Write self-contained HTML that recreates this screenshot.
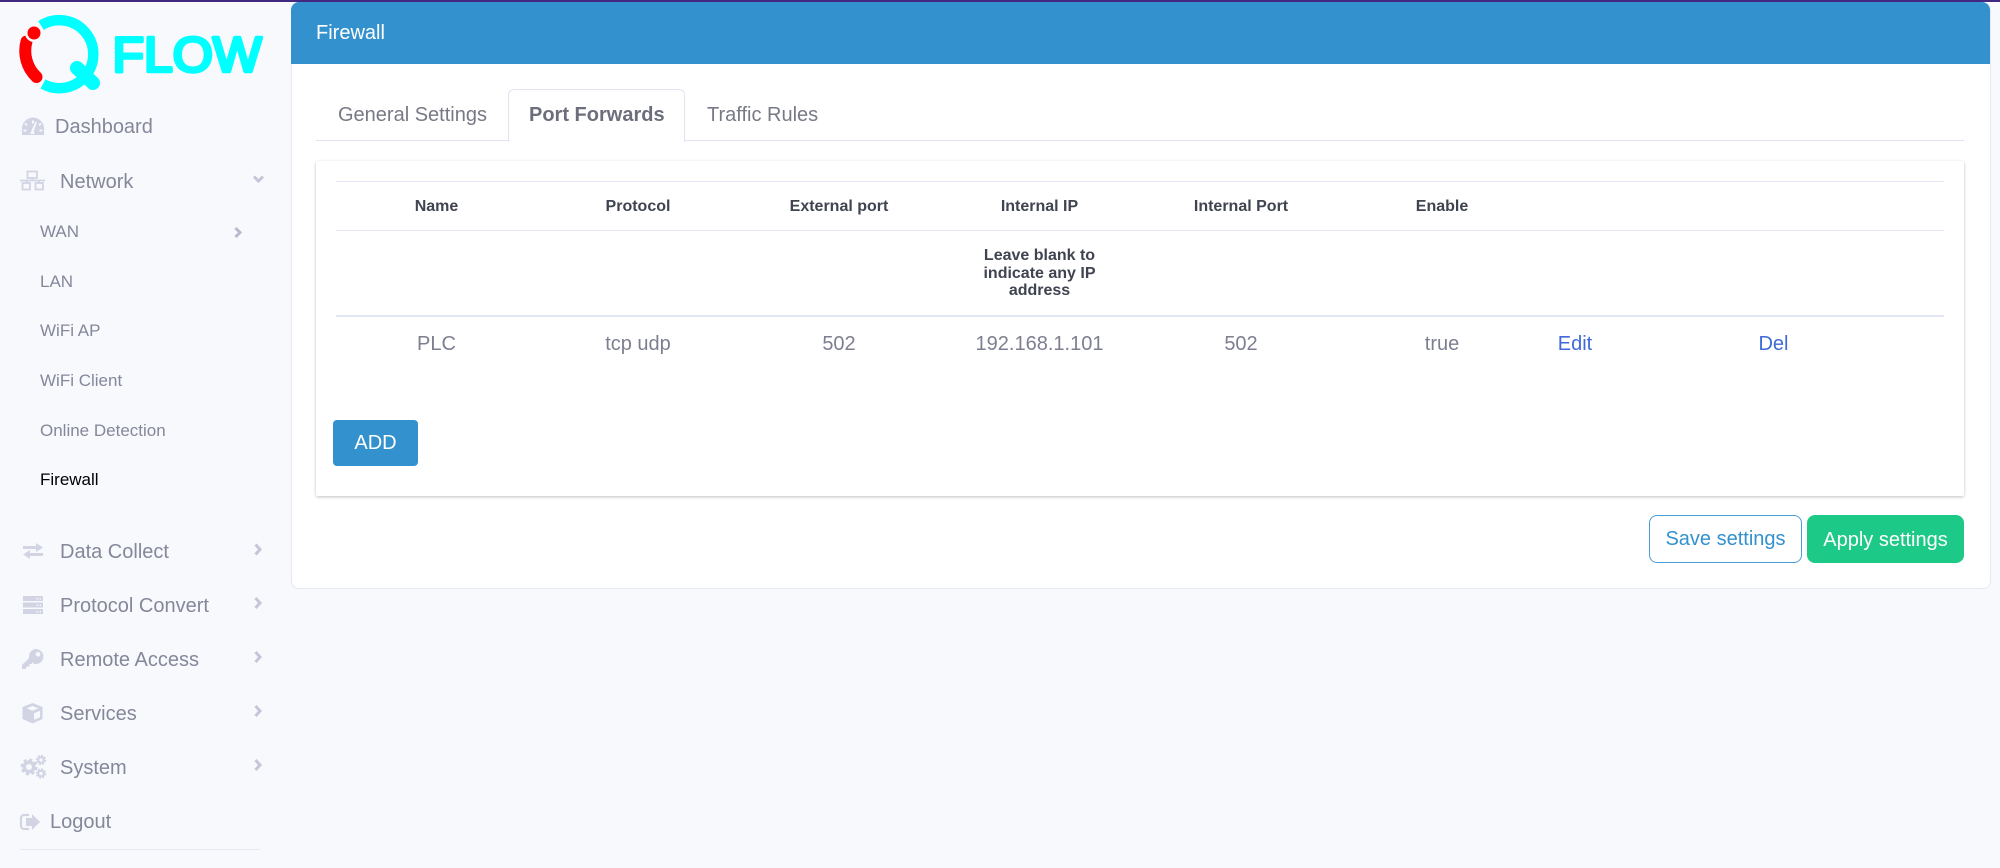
<!DOCTYPE html>
<html><head><meta charset="utf-8"><title>Firewall</title>
<style>
html,body{margin:0;padding:0;width:2000px;height:868px;overflow:hidden;background:#f8f9fd;font-family:"Liberation Sans",sans-serif}
.a{position:absolute}
.t{position:absolute;white-space:nowrap;line-height:24px;height:24px}
.m{font-size:20px;color:#85879a}
.s{font-size:17px;color:#85879a}
.c{transform:translateX(-50%)}
.h{font-size:16px;font-weight:bold;color:#3f4450}
.d{font-size:20px;color:#7d7f90}
.l{position:absolute;left:336px;width:1608px;background:#e3e6f5}
svg{position:absolute;overflow:visible}
</style></head><body>
<div class="a" style="left:0;top:0;width:2000px;height:2px;background:#42297f"></div>

<!-- logo -->
<svg style="left:0;top:0" width="290" height="100" viewBox="0 0 290 100">
<path d="M41 25.500A34 34 0 1 1 43 84" fill="none" stroke="#00ffff" stroke-width="10.500"/>
<path d="M77 68L93 83" stroke="#00ffff" stroke-width="14" stroke-linecap="round"/>
<path d="M26.500 41.500A36 36 0 0 0 36.500 77" fill="none" stroke="#ff0000" stroke-width="12" stroke-linecap="round"/>
<circle cx="34" cy="33" r="9" fill="#f8f9fd"/>
<circle cx="34" cy="33" r="6.500" fill="#ff0000"/>
<text x="112.500" y="71.500" font-family="Liberation Sans" font-size="49" textLength="149" lengthAdjust="spacingAndGlyphs" fill="#00ffff" stroke="#00ffff" stroke-width="3.500" stroke-linejoin="round">FLOW</text>
</svg>

<!-- sidebar icons -->
<svg style="left:0;top:0" width="290" height="868" viewBox="0 0 290 868" fill="#d2d4e4">
<!-- dashboard -->
<path fill-rule="evenodd" d="M33 117.500A11 11 0 0 1 44 128.500V135H22V128.500A11 11 0 0 1 33 117.500ZM32 120.500V123.500H34V120.500ZM25.500 122.800L24.500 124.300 26.500 126 27.500 124.500ZM40.500 122.800L38.500 124.500 39.500 126 41.500 124.300ZM35.500 121.500L31.500 130.500 30 134H34.500L34 130.500 37 122ZM23.500 129.500V131.500H26.500V129.500ZM39.500 129.500V131.500H42.500V129.500Z"/>
<!-- network -->
<g fill="none" stroke="#d2d4e4" stroke-width="1.800">
<rect x="27.500" y="171.500" width="9.500" height="6.500"/>
<rect x="22.500" y="183" width="7.500" height="6.500"/>
<rect x="35.500" y="183" width="7.500" height="6.500"/>
<path d="M20 180.500H45M32.500 178V180.500M26.500 180.500V183M39 180.500V183"/>
</g>
<!-- exchange -->
<path d="M23 546H36V543L43 547.500 36 552V549H23ZM43 553H30V550L23 554.500 30 559V556H43Z"/>
<!-- server -->
<path fill-rule="evenodd" d="M23 596H43V601H23ZM23 602.500H43V607.500H23ZM23 609H43V614H23ZM36.500 598V599.500H38V598ZM39.500 598V599.500H41V598ZM36.500 604.500V606H38V604.500ZM39.500 604.500V606H41V604.500ZM36.500 611V612.500H38V611ZM39.500 611V612.500H41V611Z"/>
<!-- key -->
<path fill-rule="evenodd" d="M36 649A7.500 7.500 0 1 1 33.800 663.700L32 662V664H29.500V666.500H27L25.500 669H22V665L29.100 658A7.500 7.500 0 0 1 36 649ZM38 652A2.300 2.300 0 1 0 38.100 656.600 2.300 2.300 0 0 0 38 652Z"/>
<!-- cube -->
<path fill-rule="evenodd" d="M32.500 703L42.500 707V719L32.500 723.500 22.500 719V707ZM32.500 706L26.500 708.300 32.500 710.800 38.500 708.300ZM34 713.200V719.800L40 717.300V710.700Z"/>
<!-- cogs -->
<circle cx="29" cy="767" r="4.800" fill="none" stroke="#d2d4e4" stroke-width="3.600"/>
<circle cx="29" cy="767" r="7.200" fill="none" stroke="#d2d4e4" stroke-width="2.600" stroke-dasharray="3 2.650"/>
<circle cx="41" cy="760" r="2.800" fill="none" stroke="#d2d4e4" stroke-width="2.200"/>
<circle cx="41" cy="760" r="4.400" fill="none" stroke="#d2d4e4" stroke-width="1.600" stroke-dasharray="2 1.450"/>
<circle cx="41" cy="773.500" r="2.800" fill="none" stroke="#d2d4e4" stroke-width="2.200"/>
<circle cx="41" cy="773.500" r="4.400" fill="none" stroke="#d2d4e4" stroke-width="1.600" stroke-dasharray="2 1.450"/>
<!-- logout -->
<path d="M29 815H24A3 3 0 0 0 21 818V826A3 3 0 0 0 24 829H29" fill="none" stroke="#d2d4e4" stroke-width="2.200"/>
<path d="M32 814L40 822 32 830V826H26V818H32Z"/>
</svg>

<!-- chevrons -->
<svg style="left:0;top:0" width="290" height="868" viewBox="0 0 290 868" fill="none" stroke="#c5c7d8" stroke-width="3">
<path d="M254 176.500L258.500 181 263 176.500"/>
<path d="M235.500 228L240 232.500 235.500 237" stroke="#b8bacd"/>
<path d="M255.500 544.500L260 549.500 255.500 554.500"/>
<path d="M255.500 598L260 603 255.500 608"/>
<path d="M255.500 652L260 657 255.500 662"/>
<path d="M255.500 706L260 711 255.500 716"/>
<path d="M255.500 760L260 765 255.500 770"/>
</svg>

<!-- sidebar text -->
<div class="t m" style="left:55px;top:115px">Dashboard</div>
<div class="t m" style="left:60px;top:170px">Network</div>
<div class="t s" style="left:40px;top:220px">WAN</div>
<div class="t s" style="left:40px;top:270px">LAN</div>
<div class="t s" style="left:40px;top:319px">WiFi AP</div>
<div class="t s" style="left:40px;top:369px">WiFi Client</div>
<div class="t s" style="left:40px;top:419px">Online Detection</div>
<div class="t s" style="left:40px;top:468px;color:#000">Firewall</div>
<div class="t m" style="left:60px;top:540px">Data Collect</div>
<div class="t m" style="left:60px;top:594px">Protocol Convert</div>
<div class="t m" style="left:60px;top:648px">Remote Access</div>
<div class="t m" style="left:60px;top:702px">Services</div>
<div class="t m" style="left:60px;top:756px">System</div>
<div class="t m" style="left:50px;top:810px">Logout</div>
<div class="a" style="left:20px;top:849px;width:240px;height:1px;background:#e8eaf3"></div>

<!-- panel -->
<div class="a" style="left:291px;top:2px;width:1698px;height:586px;background:#fff;border:1px solid #e6e8f4;border-top:0;border-radius:8px;box-sizing:content-box"></div>
<div class="a" style="left:291px;top:2px;width:1699px;height:62px;background:#3391cd;border-radius:8px 8px 0 0"></div>
<div class="t" style="left:316px;top:21px;font-size:20px;color:#fff">Firewall</div>

<!-- tabs -->
<div class="a" style="left:316px;top:140px;width:1648px;height:1px;background:#e2e3f1"></div>
<div class="a" style="left:508px;top:89px;width:175px;height:52px;background:#fff;border:1px solid #e2e3f1;border-bottom:0;border-radius:6px 6px 0 0"></div>
<div class="t" style="left:338px;top:103px;font-size:20px;color:#777986">General Settings</div>
<div class="t" style="left:529px;top:103px;font-size:20px;font-weight:bold;color:#6c6e7c">Port Forwards</div>
<div class="t" style="left:707px;top:103px;font-size:20px;color:#777986">Traffic Rules</div>

<!-- card -->
<div class="a" style="left:316px;top:161px;width:1648px;height:335px;background:#fff;border-radius:2px;box-shadow:0 1px 3px rgba(0,0,0,.24),0 0 1px rgba(0,0,0,.03)"></div>
<div class="l" style="top:181px;height:1px"></div>
<div class="l" style="top:230px;height:1px"></div>
<div class="l" style="top:315px;height:2px"></div>

<div class="t h c" style="left:436.500px;top:195px">Name</div>
<div class="t h c" style="left:638px;top:195px">Protocol</div>
<div class="t h c" style="left:839px;top:195px">External port</div>
<div class="t h c" style="left:1039.500px;top:195px">Internal IP</div>
<div class="t h c" style="left:1241px;top:195px">Internal Port</div>
<div class="t h c" style="left:1442px;top:195px">Enable</div>
<div class="a h" style="left:959.500px;width:160px;top:247px;line-height:17.500px;text-align:center">Leave blank to<br>indicate any IP<br>address</div>

<div class="t d c" style="left:436.500px;top:332px">PLC</div>
<div class="t d c" style="left:638px;top:332px">tcp udp</div>
<div class="t d c" style="left:839px;top:332px">502</div>
<div class="t d c" style="left:1039.500px;top:332px">192.168.1.101</div>
<div class="t d c" style="left:1241px;top:332px">502</div>
<div class="t d c" style="left:1442px;top:332px">true</div>
<div class="t d c" style="left:1575px;top:332px;color:#3f6ad8">Edit</div>
<div class="t d c" style="left:1773.500px;top:332px;color:#3f6ad8">Del</div>

<!-- buttons -->
<div class="a" style="left:333px;top:420px;width:85px;height:46px;background:#3391cd;border-radius:4px;color:#fff;font-size:20px;line-height:47px;text-align:center">ADD</div>
<div class="a" style="left:1649px;top:515px;width:153px;height:48px;box-sizing:border-box;border:1.500px solid #4a9ed8;border-radius:8px;background:#fff;color:#3391cd;font-size:20px;line-height:47px;text-align:center">Save settings</div>
<div class="a" style="left:1807px;top:515px;width:157px;height:48px;background:#1dc987;border-radius:8px;color:#fff;font-size:20px;line-height:50px;text-align:center">Apply settings</div>
</body></html>
